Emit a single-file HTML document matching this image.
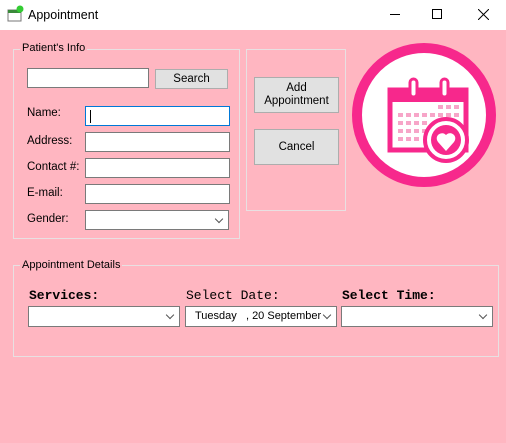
<!DOCTYPE html>
<html><head><style>
*{box-sizing:border-box;margin:0;padding:0}
body{width:506px;height:443px;background:#ffb6c1;font-family:"Liberation Sans",sans-serif;font-size:12px;position:relative;overflow:hidden;color:#000}
.a{position:absolute}
.tb{left:0;top:0;width:506px;height:30px;background:#fff}
.gb{border:1px solid #e8e0e2;}
.lg{background:#ffb6c1;padding:0 2px;font-size:11px}
.in{background:#fff;border:1px solid #7a7a7a;height:20px}
.btn{background:#e1e1e1;border:1px solid #adadad;text-align:center;font-size:11.5px}
.cb{background:#fff;border:1px solid #7a7a7a;height:21px}
.ch{position:absolute;right:6px;top:5px;width:6px;height:6px;border-right:1px solid #555;border-bottom:1px solid #555;transform:rotate(45deg)}
.lb{font-size:11.5px}
.cr{font-family:"Liberation Mono",monospace;font-weight:bold;font-size:13px}
</style></head><body>
<div class="a tb"></div>
<svg class="a" style="left:7px;top:5px" width="18" height="18"><rect x="1" y="5" width="13" height="11" fill="#fff" stroke="#777"/><rect x="1" y="5" width="13" height="3" fill="#3a8a3a"/><circle cx="13" cy="4" r="3.5" fill="#3c3"/></svg>
<div class="a" style="left:28px;top:8px;font-size:12.5px">Appointment</div>
<div class="a" style="left:390px;top:14px;width:10px;height:1px;background:#000"></div>
<div class="a" style="left:432px;top:9px;width:10px;height:10px;border:1px solid #000"></div>
<svg class="a" style="left:478px;top:9px" width="11" height="11"><path d="M0 0L11 11M11 0L0 11" stroke="#000"/></svg>

<div class="a gb" style="left:13px;top:49px;width:227px;height:190px"></div>
<div class="a lg" style="left:20px;top:42px">Patient's Info</div>
<div class="a in" style="left:27px;top:68px;width:122px"></div>
<div class="a btn" style="left:155px;top:69px;width:73px;height:20px;line-height:18px">Search</div>
<div class="a lb" style="left:27px;top:107px">Name:</div>
<div class="a lb" style="left:27px;top:135px">Address:</div>
<div class="a lb" style="left:27px;top:161px">Contact #:</div>
<div class="a lb" style="left:27px;top:187px">E-mail:</div>
<div class="a lb" style="left:27px;top:213px">Gender:</div>
<div class="a in" style="left:85px;top:106px;width:145px;border-color:#0078d7"><div class="a" style="left:4px;top:3px;width:1px;height:13px;background:#000"></div></div>
<div class="a in" style="left:85px;top:132px;width:145px"></div>
<div class="a in" style="left:85px;top:158px;width:145px"></div>
<div class="a in" style="left:85px;top:184px;width:145px"></div>
<div class="a cb" style="left:85px;top:210px;width:144px;height:20px"><div class="ch"></div></div>

<div class="a gb" style="left:246px;top:49px;width:100px;height:162px"></div>
<div class="a btn" style="left:254px;top:77px;width:85px;height:36px;padding-top:4px;line-height:13px">Add<br>Appointment</div>
<div class="a btn" style="left:254px;top:129px;width:85px;height:36px;line-height:34px">Cancel</div>

<svg class="a" style="left:350px;top:41px" width="150" height="150" viewBox="0 0 150 150">
<circle cx="74" cy="74" r="67" fill="#fff" stroke="#f7288c" stroke-width="10"/>
<g transform="translate(-4,0)">
<rect x="44" y="49" width="76" height="60" fill="#fff" stroke="#f7288c" stroke-width="5"/>
<rect x="42" y="47" width="80" height="14" fill="#f7288c"/>
<rect x="64" y="38" width="7" height="18" rx="3.5" fill="#fff" stroke="#f7288c" stroke-width="3"/>
<rect x="95" y="38" width="7" height="18" rx="3.5" fill="#fff" stroke="#f7288c" stroke-width="3"/>
<g fill="#f7a5c8">
<rect x="92" y="64" width="5" height="4"/><rect x="100" y="64" width="5" height="4"/><rect x="108" y="64" width="5" height="4"/>
<rect x="52" y="72" width="5" height="4"/><rect x="60" y="72" width="5" height="4"/><rect x="68" y="72" width="5" height="4"/><rect x="76" y="72" width="5" height="4"/><rect x="84" y="72" width="5" height="4"/><rect x="92" y="72" width="5" height="4"/><rect x="100" y="72" width="5" height="4"/><rect x="108" y="72" width="5" height="4"/>
<rect x="52" y="80" width="5" height="4"/><rect x="60" y="80" width="5" height="4"/><rect x="68" y="80" width="5" height="4"/><rect x="76" y="80" width="5" height="4"/>
<rect x="52" y="88" width="5" height="4"/><rect x="60" y="88" width="5" height="4"/><rect x="68" y="88" width="5" height="4"/><rect x="76" y="88" width="5" height="4"/>
<rect x="52" y="96" width="5" height="4"/><rect x="60" y="96" width="5" height="4"/><rect x="68" y="96" width="5" height="4"/>
</g>
<circle cx="100" cy="99" r="21" fill="#fff" stroke="#f7288c" stroke-width="4"/>
<circle cx="100" cy="99" r="15" fill="#f7288c"/>
<path d="M100 110 L92 101 A4.5 4.5 0 0 1 100 94 A4.5 4.5 0 0 1 108 101 Z" fill="#fff"/>
</g>
</svg>

<div class="a gb" style="left:13px;top:265px;width:486px;height:92px"></div>
<div class="a lg" style="left:20px;top:259px">Appointment Details</div>
<div class="a cr" style="left:29px;top:288px">Services:</div>
<div class="a cr" style="left:186px;top:288px;font-weight:normal">Select Date:</div>
<div class="a cr" style="left:342px;top:288px">Select Time:</div>
<div class="a cb" style="left:28px;top:306px;width:152px"><div class="ch"></div></div>
<div class="a cb" style="left:185px;top:306px;width:152px"><div class="a" style="left:9px;top:3px;font-size:11px;white-space:pre">Tuesday   , 20 September</div><div class="ch"></div></div>
<div class="a cb" style="left:341px;top:306px;width:152px"><div class="ch"></div></div>
</body></html>
